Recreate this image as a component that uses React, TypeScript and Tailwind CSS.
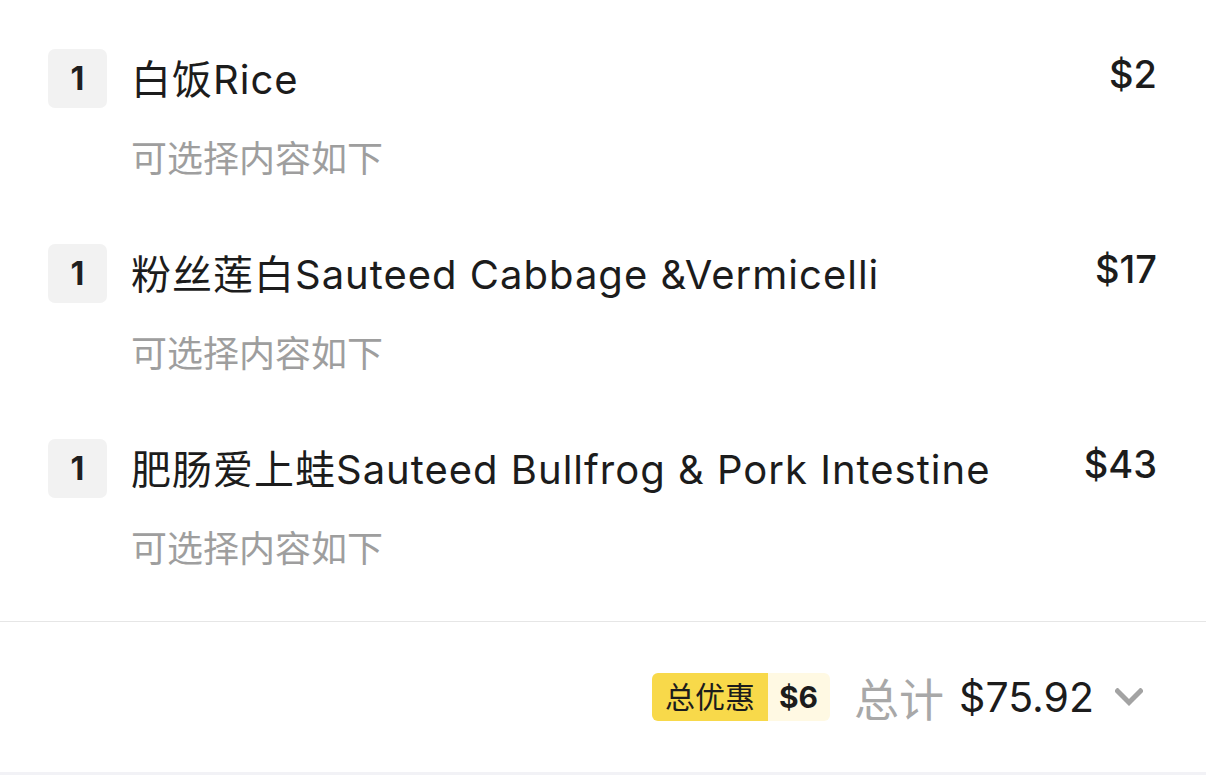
import React from "react";

const items = [
  { qty: 1, name: "白饭Rice", price: "$2" },
  { qty: 1, name: "粉丝莲白Sauteed Cabbage &Vermicelli", price: "$17" },
  { qty: 1, name: "肥肠爱上蛙Sauteed Bullfrog & Pork Intestine", price: "$43" },
];

const font = { fontFamily: 'Inter, "Noto Sans CJK SC", sans-serif' };

export default function App() {
  return (
    <div className="w-[1206px] h-[775px] bg-white overflow-hidden flex flex-col" style={font}>
      <div className="flex flex-col gap-[61px] pt-[49px] pb-[48px] pl-[48px] pr-[49px]">
        {items.map((it, i) => (
          <div key={i} className="flex items-start">
            <div className="w-[59px] h-[59px] rounded-[7px] bg-[#f2f2f2] flex items-center justify-center text-[32px] font-bold text-[#1f1f1f] shrink-0">
              {it.qty}
            </div>
            <div className="flex flex-col ml-[24px] flex-1">
              <div className="text-[40px] leading-[62px] h-[62px] tracking-[1px] text-[#1c1c1c] whitespace-nowrap">{it.name}</div>
              <div className="mt-[24px] text-[36px] leading-[48px] h-[48px] text-[#9e9e9e] whitespace-nowrap">可选择内容如下</div>
            </div>
            <div className="text-[38px] leading-[50px] h-[50px] font-medium text-[#1c1c1c] whitespace-nowrap">{it.price}</div>
          </div>
        ))}
      </div>
      <div className="h-px bg-[#e6e6e6]" />
      <div className="h-[150px] flex items-center justify-end pr-[63px]">
        <div className="flex items-stretch h-[48px] rounded-[6px] overflow-hidden">
          <div className="bg-[#f8d94a] px-[13px] flex items-center text-[30px] text-[#1c1c1c]">总优惠</div>
          <div className="bg-[#fff9e3] pl-[11px] pr-[12px] flex items-center text-[30px] font-bold text-[#1c1c1c]">$6</div>
        </div>
        <div className="ml-[24px] text-[45px] leading-none text-[#a8a8a8]" style={{ fontFamily: '"Noto Sans CJK SC", sans-serif' }}>总计</div>
        <div className="ml-[15px] text-[41px] leading-none text-[#1c1c1c]">$75.92</div>
        <svg className="ml-[21px]" width="28" height="19" viewBox="0 0 28 19">
          <polyline points="2.5,3 14,14.5 25.5,3" fill="none" stroke="#a3a3a3" strokeWidth="5" strokeLinecap="square" />
        </svg>
      </div>
      <div className="flex-1 bg-[#f2f2f6]" />
    </div>
  );
}
